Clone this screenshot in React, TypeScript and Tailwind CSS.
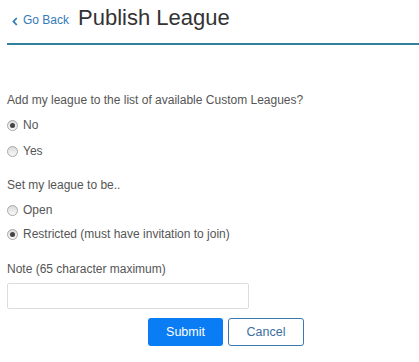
import React, { useState } from 'react';

type RadioProps = {
  checked: boolean;
  label: string;
  onSelect: () => void;
};

function Radio({ checked, label, onSelect }: RadioProps) {
  return (
    <label className="flex items-center h-[18px] cursor-pointer" onClick={onSelect}>
      <span className="inline-flex items-center justify-center w-[11px] h-[11px] rounded-full border border-[#a8a8a8] bg-gradient-to-b from-[#dadada] to-[#fafafa]">
        {checked ? <span className="w-[5px] h-[5px] rounded-full bg-[#444]" /> : null}
      </span>
      <span className="ml-[5px]">{label}</span>
    </label>
  );
}

export default function App() {
  const [listed, setListed] = useState<'no' | 'yes'>('no');
  const [access, setAccess] = useState<'open' | 'restricted'>('restricted');
  const [note, setNote] = useState('');

  return (
    <div className="w-[419px] h-[362px] bg-white pl-[7px] font-['Liberation_Sans',Arial,sans-serif] text-[12px] text-[#555]">
      <div className="flex items-baseline h-[45px] pt-[6px] border-b-2 border-[#31809e]">
        <a href="#" className="flex items-baseline ml-[5px] text-[12px] text-[#337ab7] -translate-y-[1px]">
          <svg width="6" height="9" viewBox="0 0 6 9" className="mr-[5px] self-center translate-y-[1px]">
            <path d="M4.8 1 L1.5 4.5 L4.8 8" fill="none" stroke="#337ab7" strokeWidth="1.8" />
          </svg>
          Go Back
        </a>
        <h1 className="ml-[9px] text-[22px] leading-[24px] text-[#333]">Publish League</h1>
      </div>

      <div className="mt-[46px]">
        <div className="h-[18px] leading-[18px]">Add my league to the list of available Custom Leagues?</div>
        <div className="mt-[7px]">
          <Radio checked={listed === 'no'} label="No" onSelect={() => setListed('no')} />
        </div>
        <div className="mt-[8px]">
          <Radio checked={listed === 'yes'} label="Yes" onSelect={() => setListed('yes')} />
        </div>

        <div className="mt-[16px] h-[18px] leading-[18px]">Set my league to be..</div>
        <div className="mt-[7px]">
          <Radio checked={access === 'open'} label="Open" onSelect={() => setAccess('open')} />
        </div>
        <div className="mt-[6px]">
          <Radio
            checked={access === 'restricted'}
            label="Restricted (must have invitation to join)"
            onSelect={() => setAccess('restricted')}
          />
        </div>

        <div className="mt-[17px] h-[18px] leading-[18px]">Note (65 character maximum)</div>
        <input
          value={note}
          maxLength={65}
          onChange={(e) => setNote(e.target.value)}
          className="block mt-[5px] w-[242px] h-[26px] border border-[#dcdcdc] rounded-[2px] px-2 outline-none"
        />

        <div className="flex gap-[5px] mt-[9px] ml-[141px]">
          <button className="w-[75px] h-[28px] rounded-[3px] bg-[#0a7cf4] text-white text-[12.5px]">Submit</button>
          <button className="w-[76px] h-[28px] rounded-[3px] border border-[#3a78b0] bg-white text-[#3a6fa3] text-[12.5px]">
            Cancel
          </button>
        </div>
      </div>
    </div>
  );
}
